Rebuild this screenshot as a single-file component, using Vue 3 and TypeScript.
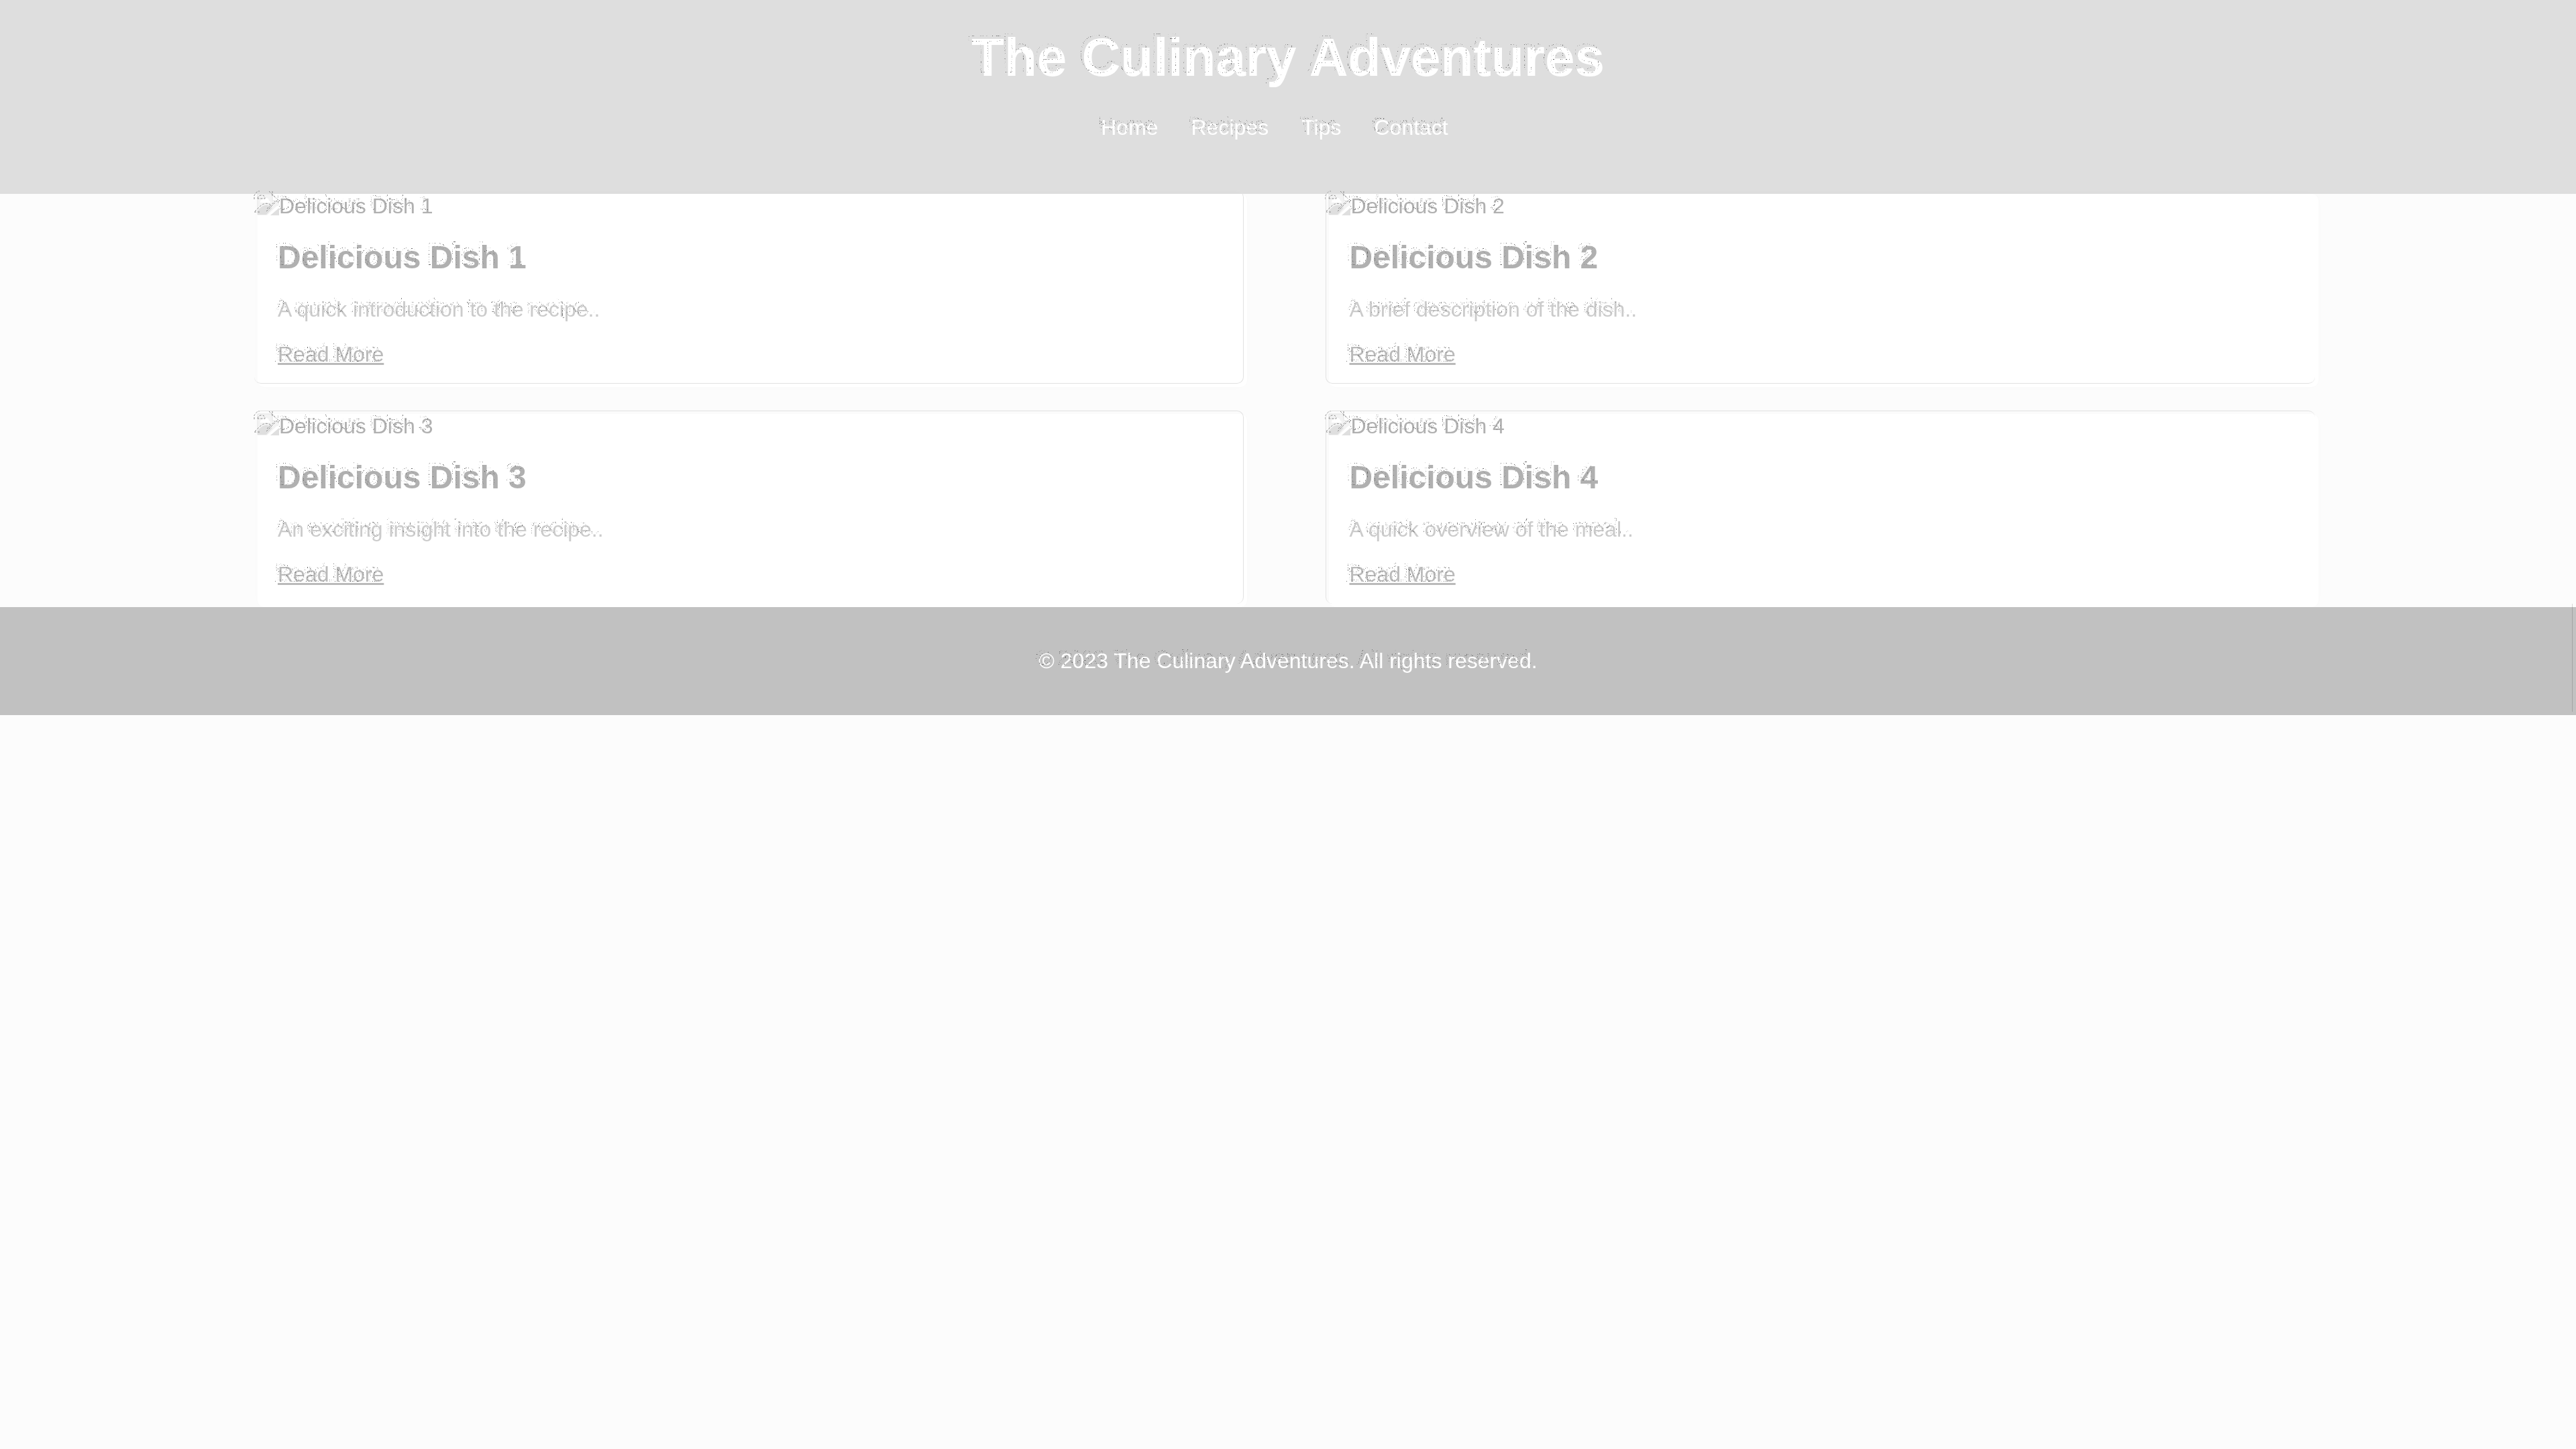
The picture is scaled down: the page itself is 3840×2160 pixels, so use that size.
<script setup lang="ts">
interface Dish {
  title: string
  text: string
}

const links: string[] = ['Home', 'Recipes', 'Tips', 'Contact']

const dishes: Dish[] = [
  { title: 'Delicious Dish 1', text: 'A quick introduction to the recipe..' },
  { title: 'Delicious Dish 2', text: 'A brief description of the dish..' },
  { title: 'Delicious Dish 3', text: 'An exciting insight into the recipe..' },
  { title: 'Delicious Dish 4', text: 'A quick overview of the meal..' },
]
</script>

<template>
  <div class="page">
    <svg class="defs" width="0" height="0" aria-hidden="true">
      <!-- Sketchy broken outline, shifted up and to the left of the letters -->
      <filter id="trace" x="-5%" y="-30%" width="110%" height="160%" color-interpolation-filters="sRGB">
        <feMorphology in="SourceAlpha" operator="erode" radius="1" result="thin" />
        <feComposite in="SourceAlpha" in2="thin" operator="out" result="edge" />
        <feTurbulence type="fractalNoise" baseFrequency="0.7" numOctaves="2" seed="4" result="noise" />
        <feColorMatrix in="noise" values="0 0 0 0 0.4  0 0 0 0 0.4  0 0 0 0 0.4  9 0 0 0 -5.2" result="specks" />
        <feOffset in="edge" dx="-5" dy="-5" result="shifted" />
        <feComposite in="specks" in2="shifted" operator="in" result="marks" />
        <feMerge>
          <feMergeNode in="SourceGraphic" />
          <feMergeNode in="marks" />
        </feMerge>
      </filter>
    </svg>

    <header class="header">
      <h1 class="trace">The Culinary Adventures</h1>
      <nav>
        <ul class="nav">
          <li v-for="link in links" :key="link"><a class="trace" href="#">{{ link }}</a></li>
        </ul>
      </nav>
    </header>

    <main class="grid">
      <article v-for="dish in dishes" :key="dish.title" class="card">
        <div class="photo">
          <svg class="broken" viewBox="0 0 32 32" aria-hidden="true">
            <path d="M0 0H22L32 10V15L14 32H0Z" fill="#f3f3f3" />
            <path d="M0 31V0H22L31 10V14" fill="none" stroke="#e4e4e4" />
            <path d="M22 1V10H31" fill="#fff" stroke="#e4e4e4" />
            <path d="M4 12a4 4 0 0 1 4-4 5 5 0 0 1 9 2 3 3 0 0 1 2 3H4Z" fill="#fff" />
            <path d="M0 31V25Q12 11 22 21L13 31H0Z" fill="#dfdfdf" />
            <path d="M19 32L32 21V32Z" fill="#dfdfdf" />
            <g fill="none" stroke="#8c8c8c" stroke-dasharray="3 2">
              <path d="M0 7Q1 2 6 2T11 7H0" />
              <path d="M-4 26L1 21Q10 11 19 16" />
              <path d="M13 26L29 10M14 22L26 11" />
              <path d="M17 -4L28 7M22 -4V3" />
              <path d="M-5 8V2L0 -4H3M-5 27H3" />
            </g>
          </svg>
          <span class="trace">{{ dish.title }}</span>
        </div>
        <div class="body">
          <h2 class="trace">{{ dish.title }}</h2>
          <p class="trace">{{ dish.text }}</p>
          <a class="more trace" href="#">Read More</a>
        </div>
      </article>
    </main>

    <footer class="footer">
      <p class="trace">© 2023 The Culinary Adventures. All rights reserved.</p>
    </footer>
  </div>
</template>

<style>
body {
  background: #fcfcfc;
}
</style>

<style scoped>
.page {
  font-family: "Liberation Sans", Arial, sans-serif;
  font-size: 32px;
  line-height: 37px;
  color: #b0b0b0;
}
.defs {
  position: absolute;
}
.trace {
  filter: url(#trace);
}
.header {
  padding: 40px;
  background: #dedede;
  color: #fff;
  text-align: center;
}
h1 {
  margin: 0 auto 40px;
  width: fit-content;
  font-size: 80px;
  line-height: 92px;
}
.nav {
  display: flex;
  justify-content: center;
  gap: 49px;
  margin: 0 0 40px;
  padding: 0 40px 0 0;
  list-style: none;
}
.nav a {
  display: block;
  color: #fff;
  text-decoration: none;
}
.grid {
  display: grid;
  grid-template-columns: 48% 48%;
  justify-content: space-between;
  row-gap: 40px;
  margin: 0 10%;
}
.card {
  position: relative;
  border-radius: 10px;
  background: #fff;
  box-shadow: 0 0 20px rgba(0, 0, 0, 0.01);
}
.card::after {
  content: "";
  position: absolute;
  inset: -5px 5px 5px -5px;
  border: 0 solid #e2e2e2;
  border-radius: 10px;
  pointer-events: none;
}
.card:nth-child(odd)::after {
  border-right-width: 1px;
}
.card:nth-child(even)::after {
  border-left-width: 1px;
}
.card:nth-child(-n + 2)::after {
  border-bottom-width: 1px;
}
.card:nth-child(n + 3)::after {
  border-top-width: 1px;
}
.photo {
  display: flex;
  width: fit-content;
}
.broken {
  width: 32px;
  height: 32px;
  overflow: visible;
}
.body {
  padding: 30px;
}
h2 {
  margin: 0 0 32px;
  width: fit-content;
  font-size: 48px;
  line-height: 55px;
}
.body p {
  margin: 0 0 30px;
  width: fit-content;
  color: #cbcbcb;
}
.more {
  display: block;
  width: fit-content;
  color: #bababa;
}
.footer {
  position: relative;
  padding: 62px 30px;
  background: #c1c1c1;
  color: #fff;
}
.footer::after {
  content: "";
  position: absolute;
  top: -5px;
  right: 5px;
  bottom: 5px;
  width: 1px;
  background: rgba(0, 0, 0, 0.15);
}
.footer p {
  margin: 0 auto;
  width: fit-content;
}
</style>
